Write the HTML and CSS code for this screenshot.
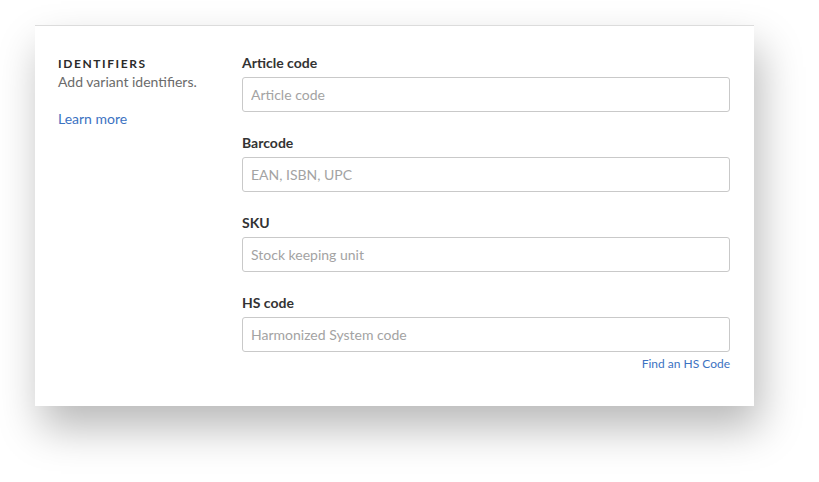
FILE: index.html
```html
<!DOCTYPE html>
<html>
<head>
<meta charset="utf-8">
<link rel="stylesheet" href="styles.css">
</head>
<body>
<div class="card">
  <div class="aside">
    <div class="heading">IDENTIFIERS</div>
    <div class="desc">Add variant identifiers.</div>
    <a class="link learn">Learn more</a>
  </div>
  <div class="fields">
    <div class="field">
      <label class="label">Article code</label>
      <input class="input" placeholder="Article code">
    </div>
    <div class="field">
      <label class="label">Barcode</label>
      <input class="input" placeholder="EAN, ISBN, UPC">
    </div>
    <div class="field">
      <label class="label">SKU</label>
      <input class="input" placeholder="Stock keeping unit">
    </div>
    <div class="field">
      <label class="label">HS code</label>
      <input class="input" placeholder="Harmonized System code">
      <a class="link hint">Find an HS Code</a>
    </div>
  </div>
</div>
</body>
</html>
```
FILE: styles.css
```css
html, body {
  margin: 0;
  padding: 0;
  background: #ffffff;
}
html {
  height: 100%;
}
body {
  box-sizing: border-box;
  min-height: 482px;
  height: 100%;
  padding: 25px 0 0 35px;
  font-family: Lato, "Noto Sans", sans-serif;
  overflow: hidden;
}
.card {
  box-sizing: border-box;
  width: 719px;
  height: 381px;
  background: #fff;
  border-top: 1px solid #dcdcdc;
  box-shadow: 6px 22px 40px rgba(0, 0, 0, 0.28);
  padding: 26px 24px 0 23px;
  display: flex;
}
.aside {
  width: 184px;
  flex: none;
  display: flex;
  flex-direction: column;
  align-items: flex-start;
  padding-top: 4px;
}
.heading {
  font-size: 12px;
  line-height: 16px;
  font-weight: 700;
  letter-spacing: 1.6px;
  color: #2b2b2b;
}
.desc {
  font-size: 14px;
  line-height: 20px;
  color: #6b6b6b;
}
.link {
  color: #3c72c2;
  cursor: pointer;
}
.learn {
  margin-top: 17px;
  font-size: 14px;
  line-height: 20px;
}
.fields {
  flex: 1;
  display: flex;
  flex-direction: column;
  gap: 20px;
}
.field {
  display: flex;
  flex-direction: column;
}
.label {
  font-size: 14px;
  line-height: 20px;
  font-weight: 700;
  color: #333;
  padding-top: 1px;
  margin-bottom: 4px;
}
.input {
  box-sizing: border-box;
  height: 35px;
  width: 100%;
  border: 1px solid #c9c9c9;
  border-radius: 3px;
  padding: 0 8px;
  font-family: Lato, "Noto Sans", sans-serif;
  font-size: 14px;
  color: #333;
  background: #fff;
  outline: none;
}
.input::placeholder {
  color: #a3a3a3;
}
.hint {
  align-self: flex-end;
  margin-top: 4px;
  font-size: 12px;
  line-height: 16px;
}
```
